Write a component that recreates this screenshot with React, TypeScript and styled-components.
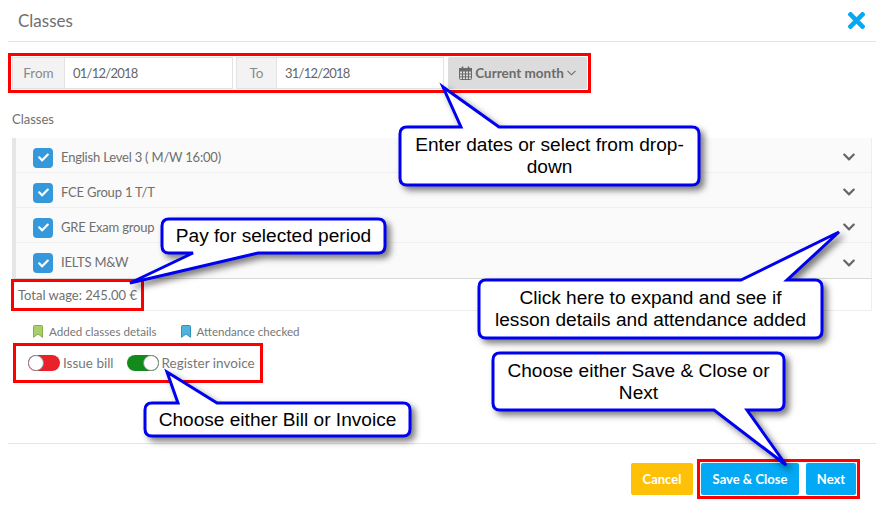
import React from "react";
import styled, { createGlobalStyle } from "styled-components";
import { FaTimes, FaChevronDown, FaCheck } from "react-icons/fa";

const Global = createGlobalStyle`
  html, body { margin: 0; padding: 0; background: #fff; }
  body { font-family: Lato, "Noto Sans", sans-serif; color: #666; font-size: 13px; }
  * { box-sizing: border-box; }
`;

const Page = styled.div`
  position: relative;
  width: 888px;
  height: 509px;
  overflow: hidden;
  padding: 0 12px 0 8px;
`;
const Header = styled.header`
  height: 42px;
  display: flex;
  align-items: center;
  justify-content: space-between;
  padding: 0 7px 1px 10px;
  border-bottom: 1px solid #e5e5e5;
`;
const Title = styled.h1`
  margin: 0;
  font-weight: 400;
  font-size: 17px;
  color: #6f6f6f;
`;
const Close = styled.span`
  display: flex;
  color: #03a9f4;
  font-size: 25px;
`;
const DateRow = styled.div`
  display: flex;
  margin: 15px 0 0 4px;
  height: 32px;
  width: 575px;
`;
const Addon = styled.span<{ $w: number }>`
  width: ${(p) => p.$w}px;
  display: flex;
  align-items: center;
  justify-content: center;
  background: #f3f3f3;
  border: 1px solid #e3e3e3;
  border-right: none;
  color: #8a8a8a;
  font-size: 13.5px;
`;
const DateInput = styled.span<{ $w: number }>`
  width: ${(p) => p.$w}px;
  margin-right: 3px;
  display: flex;
  align-items: center;
  padding-left: 8px;
  background: #fff;
  border: 1px solid #e3e3e3;
  font-size: 13px;
  letter-spacing: -0.75px;
  color: #666;
`;
const RangeButton = styled.span`
  margin-left: 1px;
  flex: 1;
  display: flex;
  align-items: center;
  justify-content: center;
  gap: 3px;
  background: #dcdcdc;
  border-radius: 2px;
  color: #6b6b6b;
  font-weight: 700;
  font-size: 13.5px;
`;
const SectionLabel = styled.div`
  margin: 21px 0 0 4px;
  height: 18px;
  line-height: 18px;
  font-size: 13px;
  color: #6f6f6f;
`;
const List = styled.div`
  margin: 10px 0 0 4px;
  width: 860px;
  border-left: 4px solid #e6e6e6;
  border-right: 1px solid #eee;
  border-bottom: 1px solid #d9d9d9;
`;
const Row = styled.div`
  height: 35px;
  display: flex;
  align-items: center;
  padding: 5px 15px 0 17px;
  background: #fafafa;
  border-bottom: 1px solid #f0f0f0;
  &:last-child { border-bottom: none; }
`;
const Check = styled.span`
  width: 20px;
  height: 20px;
  border-radius: 4px;
  background: #3498db;
  color: #fff;
  display: flex;
  align-items: center;
  justify-content: center;
  font-size: 11px;
  margin-right: 8px;
`;
const RowName = styled.span`
  flex: 1;
  color: #6f6f6f;
  font-size: 13px;
  letter-spacing: -0.2px;
  margin-top: -2px;
`;
const Caret = styled.span`
  display: flex;
  color: #666;
  font-size: 14px;
  margin-top: -1px;
`;
const Total = styled.div`
  margin-left: 4px;
  width: 860px;
  height: 32px;
  display: flex;
  align-items: center;
  padding-left: 6px;
  border: solid #eee;
  border-width: 0 1px 1px 0;
  font-size: 13px;
  color: #6f6f6f;
`;
const Legend = styled.div`
  display: flex;
  align-items: center;
  margin: 12px 0 0 25px;
  height: 16px;
  font-size: 11.6px;
  color: #777;
`;
const LegendItem = styled.span<{ $c: string; $b: string }>`
  display: flex;
  align-items: center;
  gap: 6px;
  margin-right: 24px;
  svg { fill: ${(p) => p.$c}; stroke: ${(p) => p.$b}; }
`;
const Toggles = styled.div`
  display: flex;
  align-items: center;
  margin: 16px 0 0 20px;
  height: 16px;
  font-size: 13.5px;
  color: #777;
`;
const Toggle = styled.span`
  display: flex;
  align-items: center;
  gap: 3px;
  margin-right: 13px;
`;
const Track = styled.span<{ $on: boolean; $c: string }>`
  display: flex;
  justify-content: ${(p) => (p.$on ? "flex-end" : "flex-start")};
  width: 32px;
  height: 16px;
  border-radius: 8px;
  background: ${(p) => p.$c};
`;
const Knob = styled.span`
  width: 16px;
  height: 16px;
  border-radius: 50%;
  background: #fff;
  border: 1px solid #8c8c8c;
`;
const Footer = styled.footer`
  margin-top: 72px;
  border-top: 1px solid #e5e5e5;
  padding: 19px 20px 0 0;
  display: flex;
  justify-content: flex-end;
  gap: 7px;
`;
const Btn = styled.span<{ $w: number; $c: string }>`
  width: ${(p) => p.$w}px;
  height: 32px;
  display: flex;
  align-items: center;
  justify-content: center;
  background: ${(p) => p.$c};
  color: #fff;
  font-weight: 700;
  font-size: 13px;
  border-radius: 2px;
`;
const CancelBtn = styled(Btn)`
  margin-right: 1px;
`;
const RedBox = styled.div<{ $x: number; $y: number; $w: number; $h: number }>`
  position: absolute;
  left: ${(p) => p.$x}px;
  top: ${(p) => p.$y}px;
  width: ${(p) => p.$w}px;
  height: ${(p) => p.$h}px;
  border: 3px solid #f00;
`;
const Bubble = styled.div<{ $x: number; $y: number; $w: number; $h: number }>`
  position: absolute;
  left: ${(p) => p.$x}px;
  top: ${(p) => p.$y}px;
  width: ${(p) => p.$w}px;
  height: ${(p) => p.$h}px;
  display: flex;
  align-items: center;
  justify-content: center;
  text-align: center;
  font-family: "Liberation Sans", Arial, sans-serif;
  font-size: 19.1px;
  line-height: 22px;
  color: #000;
`;
const BubbleShape = styled.svg`
  position: absolute;
  left: 0;
  top: 0;
  overflow: visible;
  filter: drop-shadow(4px 4px 3px rgba(0, 0, 0, 0.5));
`;
const BubbleText = styled.span`
  position: relative;
  white-space: nowrap;
`;

type CalloutProps = {
  x: number; y: number; w: number; h: number;
  side: "top" | "bottom";
  a: number; b: number;
  tip: [number, number];
  children: React.ReactNode;
};

function Callout({ x, y, w, h, side, a, b, tip, children }: CalloutProps) {
  const r = 7;
  const tx = tip[0] - x;
  const ty = tip[1] - y;
  const A = a - x;
  const B = b - x;
  const top = side === "top" ? `L${A} 0 L${tx} ${ty} L${B} 0 ` : "";
  const bottom = side === "bottom" ? `L${B} ${h} L${tx} ${ty} L${A} ${h} ` : "";
  const d = `M${r} 0 ${top}L${w - r} 0 Q${w} 0 ${w} ${r} L${w} ${h - r} Q${w} ${h} ${w - r} ${h} ${bottom}L${r} ${h} Q0 ${h} 0 ${h - r} L0 ${r} Q0 0 ${r} 0 Z`;
  return (
    <Bubble $x={x} $y={y} $w={w} $h={h}>
      <BubbleShape width={w} height={h}>
        <path d={d} fill="#fff" stroke="#0000f0" strokeWidth={3} strokeLinejoin="miter" />
      </BubbleShape>
      <BubbleText>{children}</BubbleText>
    </Bubble>
  );
}

function CalendarIcon() {
  return (
    <svg width="13" height="14" viewBox="0 0 13 14" fill="none" stroke="#6b6b6b" strokeWidth="1">
      <rect x="0.5" y="2.5" width="12" height="11" rx="1" />
      <rect x="0.5" y="2.5" width="12" height="2.5" fill="#6b6b6b" />
      <path d="M3.5 5v8.5M6.5 5v8.5M9.5 5v8.5M.5 8h12M.5 10.8h12" />
      <path d="M3.5 .5v3M9.5 .5v3" strokeWidth="1.6" />
    </svg>
  );
}

function ThinCaret() {
  return (
    <svg width="9" height="6" viewBox="0 0 9 6" fill="none" stroke="#6b6b6b" strokeWidth="1.1">
      <path d="M.5 .8 L4.5 4.8 L8.5 .8" />
    </svg>
  );
}

function Ribbon() {
  return (
    <svg width="10" height="13" viewBox="0 0 10 13" strokeWidth="1">
      <path d="M1.5 .5 H8.5 Q9.5 .5 9.5 1.5 V12.3 L5 9 L.5 12.3 V1.5 Q.5 .5 1.5 .5 Z" />
    </svg>
  );
}

const classes = ["English Level 3 ( M/W 16:00)", "FCE Group 1 T/T", "GRE Exam group", "IELTS M&W"];

export default function App() {
  return (
    <Page>
      <Global />
      <Header>
        <Title>Classes</Title>
        <Close><FaTimes /></Close>
      </Header>
      <DateRow>
        <Addon $w={52}>From</Addon>
        <DateInput $w={169}>01/12/2018</DateInput>
        <Addon $w={40}>To</Addon>
        <DateInput $w={168}>31/12/2018</DateInput>
        <RangeButton><CalendarIcon />Current month<ThinCaret /></RangeButton>
      </DateRow>
      <SectionLabel>Classes</SectionLabel>
      <List>
        {classes.map((c) => (
          <Row key={c}>
            <Check><FaCheck /></Check>
            <RowName>{c}</RowName>
            <Caret><FaChevronDown /></Caret>
          </Row>
        ))}
      </List>
      <Total>Total wage: 245.00 €</Total>
      <Legend>
        <LegendItem $c="#a9cf6a" $b="#86ac47"><Ribbon />Added classes details</LegendItem>
        <LegendItem $c="#4fb3dc" $b="#2f93bd"><Ribbon />Attendance checked</LegendItem>
      </Legend>
      <Toggles>
        <Toggle><Track $on={false} $c="#e8212b"><Knob /></Track>Issue bill</Toggle>
        <Toggle><Track $on $c="#128a1c"><Knob /></Track>Register invoice</Toggle>
      </Toggles>
      <Footer>
        <CancelBtn $w={62} $c="#ffc107">Cancel</CancelBtn>
        <Btn $w={98} $c="#03a9f4">Save &amp; Close</Btn>
        <Btn $w={50} $c="#03a9f4">Next</Btn>
      </Footer>

      <RedBox $x={8} $y={53} $w={583} $h={40} />
      <RedBox $x={11} $y={279} $w={133} $h={32} />
      <RedBox $x={13} $y={343} $w={250} $h={40} />
      <RedBox $x={697} $y={459} $w={163} $h={40} />

      <Callout x={400} y={127} w={299} h={58} side="top" a={461} b={499} tip={[443, 87]}>
        Enter dates or select from drop-<br />down
      </Callout>
      <Callout x={162} y={219} w={223} h={34} side="bottom" a={193} b={258} tip={[130, 283]}>
        Pay for selected period
      </Callout>
      <Callout x={479} y={280} w={343} h={58} side="top" a={741} b={787} tip={[839, 232]}>
        Click here to expand and see if<br />lesson details and attendance added
      </Callout>
      <Callout x={493} y={353} w={291} h={57} side="bottom" a={714} b={747} tip={[786, 465]}>
        Choose either Save &amp; Close or<br />Next
      </Callout>
      <Callout x={145} y={403} w={265} h={33} side="top" a={178} b={217} tip={[167, 372]}>
        Choose either Bill or Invoice
      </Callout>
    </Page>
  );
}
